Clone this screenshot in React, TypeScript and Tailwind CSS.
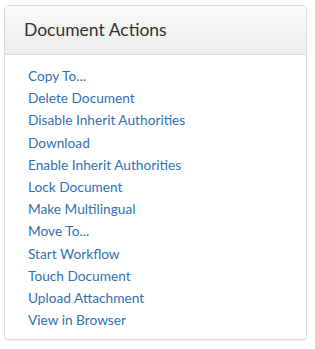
const actions = [
  'Copy To...',
  'Delete Document',
  'Disable Inherit Authorities',
  'Download',
  'Enable Inherit Authorities',
  'Lock Document',
  'Make Multilingual',
  'Move To...',
  'Start Workflow',
  'Touch Document',
  'Upload Attachment',
  'View in Browser',
];

export default function App() {
  return (
    <div className="min-h-[349px] w-[315px] bg-white pl-1 pt-[5px] font-['Lato',sans-serif]">
      <div className="w-[303px] rounded border border-[#dddddd] bg-white shadow-[0_1px_1px_rgba(0,0,0,0.05)]">
        <div className="flex h-[49px] items-center rounded-t border-b border-[#dddddd] bg-gradient-to-b from-[#fafafa] to-[#ececec] px-[19px]">
          <h3 className="text-[17.5px] font-normal text-[#333333]">Document Actions</h3>
        </div>
        <ul className="pt-[10px] pb-[8px] pl-[23px]">
          {actions.map((a) => (
            <li key={a} className="h-[22.2px] text-[13.7px] leading-[22px]">
              <a href="#" className="text-[#3371b5] hover:underline">
                {a}
              </a>
            </li>
          ))}
        </ul>
      </div>
    </div>
  );
}
